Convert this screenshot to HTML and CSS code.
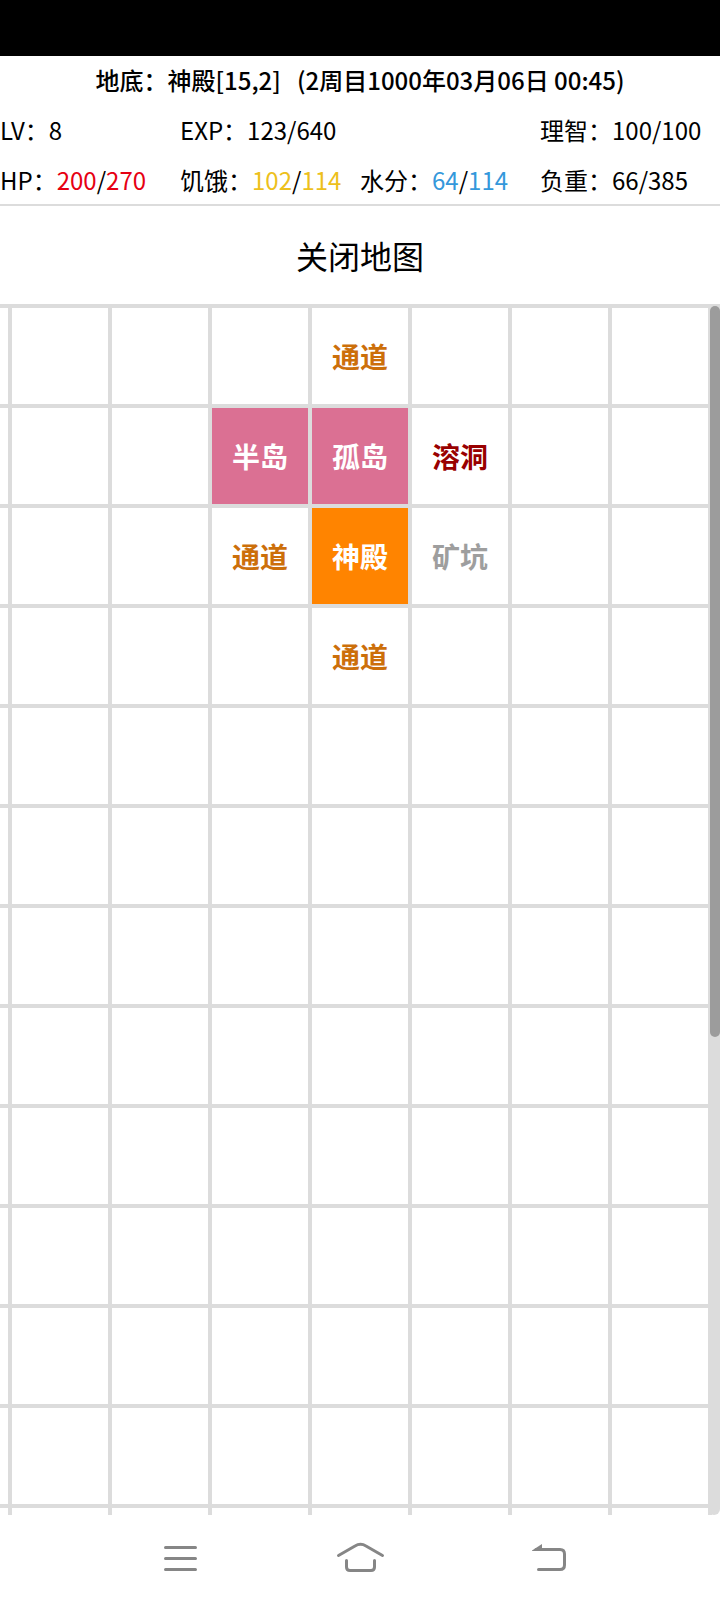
FILE: index.html
```html
<!DOCTYPE html>
<html lang="zh-CN">
<head>
    <meta charset="UTF-8">
    <meta name="viewport" content="width=device-width, initial-scale=1.0">
    <title>地图</title>
    <link rel="stylesheet" href="styles.css">
</head>
<body>
    <div class="status-bar"></div>

    <header>
        <h1>地底：神殿[15,2]&nbsp; &nbsp;(2周目1000年03月06日 00:45)</h1>
        <div class="stats">
            <div>LV：8</div>
            <div class="wide">EXP：123/640</div>
            <div>理智：100/100</div>
            <div>HP：<span class="hp">200</span>/<span class="hp">270</span></div>
            <div>饥饿：<span class="food">102</span>/<span class="food">114</span></div>
            <div>水分：<span class="water">64</span>/<span class="water">114</span></div>
            <div>负重：66/385</div>
        </div>
    </header>

    <button class="toggle" type="button">关闭地图</button>

    <main class="map">
        <div class="grid" id="grid"></div>
        <div class="scroll"><div class="thumb"></div></div>
    </main>

    <nav>
        <button type="button" aria-label="菜单">
            <svg width="60" height="40" viewBox="0 0 60 40">
                <path d="M15.500 8.500H45.500M15.500 19.500H45.500M15.500 30.500H45.500"/>
            </svg>
        </button>
        <button type="button" aria-label="主页">
            <svg width="60" height="40" viewBox="0 0 60 40">
                <path d="M8.500 16.500L25 7Q30.500 3.500 36 7L52.500 16.500"/>
                <path d="M16.500 21.500V28Q16.500 31.500 20 31.500H41Q44.500 31.500 44.500 28V21.500"/>
            </svg>
        </button>
        <button type="button" aria-label="返回">
            <svg width="60" height="40" viewBox="0 0 60 40">
                <path d="M26 10.500H50Q54.500 10.500 54.500 15V26Q54.500 30.500 50 30.500H28.500"/>
                <path class="tip" d="M22 11.500L32 5V12H22Z"/>
            </svg>
        </button>
    </nav>
    <script src="script.js"></script>
</body>
</html>
```

FILE: styles.css
```css
* {
    box-sizing: border-box;
}
body {
    display: flex;
    flex-direction: column;
    height: 100vh;
    margin: 0;
    background: #fff;
    color: #000;
    font-family: "Noto Sans CJK SC", sans-serif;
    font-size: 24px;
}
button {
    padding: 0;
    border: 0;
    background: none;
    color: inherit;
    font: inherit;
}
.status-bar {
    height: 56px;
    background: #000;
}
header {
    border-bottom: 2px solid #dcdcdc;
}
header h1 {
    margin: 0;
    padding-bottom: 2px;
    font-size: 24px;
    font-weight: 500;
    line-height: 48px;
    text-align: center;
}
.stats {
    display: grid;
    grid-template-columns: repeat(4, 1fr);
    row-gap: 2px;
    line-height: 48px;
    white-space: nowrap;
}
.wide {
    grid-column: span 2;
}
.hp {
    color: #e60012;
}
.food {
    color: #edc01c;
}
.water {
    color: #3498db;
}
.toggle {
    font-size: 32px;
    line-height: 98px;
}

/* map */
.map {
    position: relative;
    display: flex;
    flex: 1;
    justify-content: center;
    min-height: 0;
    overflow: hidden;
}
.grid {
    display: grid;
    flex: none;
    grid-template-columns: repeat(9, 96px);
    grid-auto-rows: 96px;
    gap: 4px;
    height: max-content;
    padding: 4px;
    background: #dcdcdc;
}
.cell {
    background: #fff;
    font-size: 28px;
    font-weight: 700;
    line-height: 96px;
    text-align: center;
}
.path {
    color: #cc6f0a;
}
.island {
    background: #db7093;
    color: #fff;
}
.cave {
    color: #990000;
}
.mine {
    color: #9e9e9e;
}
.current {
    background: #ff8400;
    color: #fff;
}
.scroll {
    position: absolute;
    top: 2px;
    right: 0;
    bottom: 0;
    width: 12px;
    padding-left: 2px;
    border-radius: 0 0 6px 6px;
    background: #dcdcdc;
}
.thumb {
    height: 60.5%;
    border-radius: 5px;
    background: #9c9c9c;
}

nav {
    display: flex;
    justify-content: space-around;
    height: 85px;
    padding: 2px 12.5% 0;
}
nav svg {
    display: block;
    fill: none;
    stroke: #868686;
    stroke-width: 3;
    stroke-linecap: round;
}
nav .tip {
    fill: #868686;
    stroke: none;
}
```

FILE: script.js
```js
var COLS = 9;
var ROWS = 13;

// key is "row,col"
var places = {
    '0,4': ['通道', 'path'],
    '1,3': ['半岛', 'island'],
    '1,4': ['孤岛', 'island'],
    '1,5': ['溶洞', 'cave'],
    '2,3': ['通道', 'path'],
    '2,4': ['神殿', 'current'],
    '2,5': ['矿坑', 'mine'],
    '3,4': ['通道', 'path']
};

var grid = document.getElementById('grid');
for (var r = 0; r < ROWS; r++) {
    for (var c = 0; c < COLS; c++) {
        var cell = document.createElement('div');
        var place = places[r + ',' + c];
        cell.className = 'cell';
        if (place) {
            cell.textContent = place[0];
            cell.classList.add(place[1]);
        }
        grid.appendChild(cell);
    }
}
```
